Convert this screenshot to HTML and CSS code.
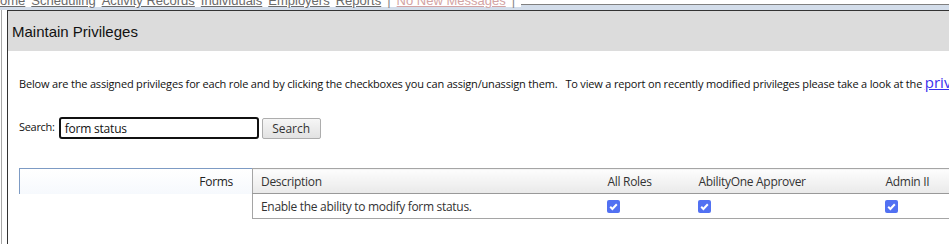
FILE: index.html
```html
<!DOCTYPE html>
<html>
<head>
<meta charset="utf-8">
<link rel="stylesheet" href="styles.css">
</head>
<body>
<div class="topbar">
  <nav class="nav">
    <a class="nav-link">ome</a>
    <a class="nav-link">Scheduling</a>
    <a class="nav-link">Activity Records</a>
    <a class="nav-link">Individuals</a>
    <a class="nav-link">Employers</a>
    <a class="nav-link">Reports</a>
    <span class="sep">|</span>
    <a class="nav-link msg">No New Messages</a>
    <span class="sep">|</span>
  </nav>
  <div class="topfill"></div>
</div>
<div class="stage">
  <div class="side"></div>
  <div class="dialog">
    <div class="dialog-head">Maintain Privileges</div>
    <div class="dialog-body">
      <p class="intro">Below are the assigned privileges for each role and by clicking the checkboxes you can assign/unassign them.&nbsp;&nbsp; To view a report on recently modified privileges please take a look at the <a class="report-link">privileges report</a></p>
      <div class="search-row">
        <label class="search-label">Search:</label>
        <div class="search-input">form status</div>
        <button class="search-btn">Search</button>
      </div>
      <div class="grid">
        <div class="cat-panel"><span class="cat">Forms</span></div>
        <table class="priv">
          <colgroup>
            <col class="w-desc">
            <col class="w-all">
            <col class="w-ab">
            <col class="w-adm">
          </colgroup>
          <thead>
            <tr>
              <th class="first">Description</th>
              <th>All Roles</th>
              <th>AbilityOne Approver</th>
              <th>Admin II</th>
            </tr>
          </thead>
          <tbody>
            <tr>
              <td class="first">Enable the ability to modify form status.</td>
              <td><span class="cb"><svg width="13" height="13" viewBox="0 0 13 13"><polyline points="3.2,6.8 5.4,9 9.8,4.2" fill="none" stroke="#fff" stroke-width="2"/></svg></span></td>
              <td><span class="cb"><svg width="13" height="13" viewBox="0 0 13 13"><polyline points="3.2,6.8 5.4,9 9.8,4.2" fill="none" stroke="#fff" stroke-width="2"/></svg></span></td>
              <td><span class="cb"><svg width="13" height="13" viewBox="0 0 13 13"><polyline points="3.2,6.8 5.4,9 9.8,4.2" fill="none" stroke="#fff" stroke-width="2"/></svg></span></td>
            </tr>
          </tbody>
        </table>
      </div>
    </div>
  </div>
</div>
</body>
</html>
```
FILE: styles.css
```css
html, body {
  margin: 0;
  padding: 0;
  height: 100%;
  overflow: hidden;
  background: #fff;
}
body {
  display: flex;
  flex-direction: column;
  font-family: "Liberation Sans", Arial, sans-serif;
}
.topbar {
  height: 10px;
  display: flex;
  overflow: hidden;
  flex-shrink: 0;
  background: linear-gradient(to bottom, #fff 0, #fff 5px, #d3ddea 5px);
}
.nav {
  display: flex;
  align-items: flex-end;
  white-space: nowrap;
  font-size: 13px;
  line-height: 13px;
  margin-top: -6px;
  height: 13px;
  background: #fff;
}
.nav-link {
  color: #6a6a6a;
  text-decoration: underline;
  margin-right: 6px;
}
.nav-link.msg {
  color: #d3a3a3;
}
.sep {
  color: #888;
  margin-right: 6px;
}
.topfill {
  flex: 1;
  height: 6px;
  margin-top: 4px;
  border-top: 1px solid #808080;
}
.stage {
  flex: 1;
  display: flex;
}
.side {
  width: 6px;
  margin-left: 1px;
  border-left: 1px solid #a8a8a8;
  box-sizing: border-box;
  background: #fff;
  flex-shrink: 0;
}
.dialog {
  flex: 1;
  border-top: 1px solid #333;
  border-left: 1px solid #333;
  display: flex;
  flex-direction: column;
  min-width: 0;
}
.dialog-head {
  height: 40px;
  background: #dcdcdc;
  padding-left: 4px;
  display: flex;
  align-items: center;
  font-size: 15px;
  color: #111;
  flex-shrink: 0;
}
.dialog-body {
  padding: 24px 0 0 11px;
  font-family: "Open Sans", "Noto Sans", sans-serif;
  font-size: 11px;
  color: #111;
  white-space: nowrap;
}
.intro {
  margin: 0;
  line-height: 15px;
  height: 15px;
  letter-spacing: -0.18px;
}
.report-link {
  color: #3b30ee;
  text-decoration: underline;
  font-size: 15px;
  letter-spacing: 0;
}
.search-row {
  display: flex;
  align-items: center;
  margin-top: 27px;
  height: 22px;
}
.search-label {
  margin-right: 4px;
  margin-top: -3px;
  letter-spacing: -0.3px;
}
.search-input {
  box-sizing: border-box;
  width: 200px;
  height: 22px;
  border: 2px solid #111;
  border-radius: 3px;
  padding-left: 4px;
  display: flex;
  align-items: center;
  font-size: 12px;
  letter-spacing: -0.2px;
}
.search-btn {
  box-sizing: border-box;
  margin-left: 3px;
  width: 59px;
  height: 21px;
  border: 1px solid #adadad;
  border-radius: 2px;
  background: linear-gradient(to bottom, #f6f6f6, #e2e2e2);
  font-family: inherit;
  font-size: 12px;
  color: #333;
  padding: 0;
}
.grid {
  display: flex;
  margin-top: 29px;
  align-items: flex-start;
}
.cat-panel {
  box-sizing: border-box;
  width: 233px;
  flex-shrink: 0;
  height: 26px;
  border-top: 1px solid #7d9bc4;
  border-left: 1px solid #7d9bc4;
  background: linear-gradient(to bottom, #fff, #f6f9fd);
  display: flex;
  justify-content: flex-end;
  align-items: center;
  padding-right: 19px;
  font-size: 12px;
  letter-spacing: -0.3px;
  color: #222;
}
.priv {
  flex-shrink: 0;
  border-collapse: collapse;
  font-size: 12px;
  letter-spacing: -0.3px;
  color: #333;
  table-layout: fixed;
  width: 708px;
}
.w-desc { width: 347px; }
.w-all { width: 91px; }
.w-ab { width: 187px; }
.w-adm { width: 83px; }
.priv th {
  box-sizing: border-box;
  height: 25px;
  padding: 0 0 0 8px;
  text-align: left;
  font-weight: normal;
  background: linear-gradient(to bottom, #fdfdfd, #e9e9e9);
  border-top: 1px solid #a5a5a5;
  border-bottom: 1px solid #999;
}
.priv td {
  height: 24px;
  padding: 0 0 0 7px;
  border-bottom: 1px solid #a5a5a5;
  vertical-align: middle;
}
.priv td.first {
  padding-left: 8px;
}
.priv .first {
  border-left: 1px solid #a5a5a5;
}
.cb {
  display: block;
  width: 13px;
  height: 13px;
  border-radius: 2px;
  background: #5271f2;
}
.cb svg { display: block; }
```
